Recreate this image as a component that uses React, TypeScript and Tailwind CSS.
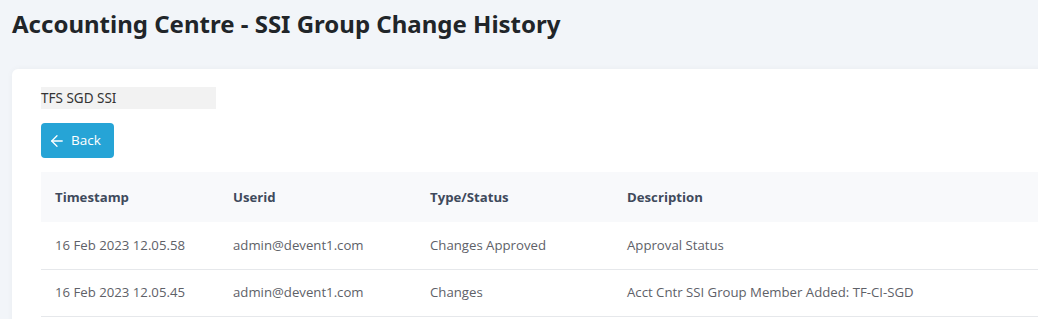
import { ArrowLeft } from "lucide-react";

const rows = [
  { ts: "16 Feb 2023 12.05.58", user: "admin@devent1.com", type: "Changes Approved", desc: "Approval Status" },
  { ts: "16 Feb 2023 12.05.45", user: "admin@devent1.com", type: "Changes", desc: "Acct Cntr SSI Group Member Added: TF-CI-SGD" },
];

export default function App() {
  return (
    <div className="min-h-[319px] overflow-hidden bg-[#f2f5f9] font-['Open_Sans',sans-serif]">
      {/* Page title */}
      <h1 className="h-[69px] pl-3 pt-[6px] text-[24px] font-bold leading-[36px] text-[#212529] font-['Noto_Sans',sans-serif]">
        Accounting Centre - SSI Group Change History
      </h1>

      {/* Card */}
      <div className="ml-3 w-[1080px] rounded-tl-md bg-white pb-6 pl-[29px] pt-[18px] shadow-[0_0_6px_rgba(0,0,0,0.04)]">
        <div className="flex h-[22px] w-[175px] items-center bg-[#f2f2f2] text-[13.5px] text-[#333] font-['Noto_Sans',sans-serif]">
          TFS SGD SSI
        </div>

        <button className="mt-[14px] flex h-[35px] w-[73px] items-center gap-[5px] rounded-[4px] bg-[#26a4d6] pl-[7px] text-[13.5px] text-white">
          <ArrowLeft size={18} strokeWidth={1.7} />
          Back
        </button>

        <table className="mt-[14px] w-full table-fixed border-collapse text-left text-[13.2px]">
          <colgroup>
            <col className="w-[178px]" />
            <col className="w-[197px]" />
            <col className="w-[197px]" />
            <col />
          </colgroup>
          <thead>
            <tr className="h-[50px] bg-[#f8f9fb]">
              <th className="pl-[14px] pt-[2px] font-bold text-[#3f4a5c]">Timestamp</th>
              <th className="pl-[14px] pt-[2px] font-bold text-[#3f4a5c]">Userid</th>
              <th className="pl-[14px] pt-[2px] font-bold text-[#3f4a5c]">Type/Status</th>
              <th className="pl-[14px] pt-[2px] font-bold text-[#3f4a5c]">Description</th>
            </tr>
          </thead>
          <tbody>
            {rows.map((r) => (
              <tr key={r.ts} className="h-[47px] border-b border-[#e6e8eb] text-[#5e6168]">
                <td className="pl-[14px] pt-[1px]">{r.ts}</td>
                <td className="pl-[14px] pt-[1px]">{r.user}</td>
                <td className="pl-[14px] pt-[1px]">{r.type}</td>
                <td className="pl-[14px] pt-[1px]">{r.desc}</td>
              </tr>
            ))}
          </tbody>
        </table>
      </div>
    </div>
  );
}
